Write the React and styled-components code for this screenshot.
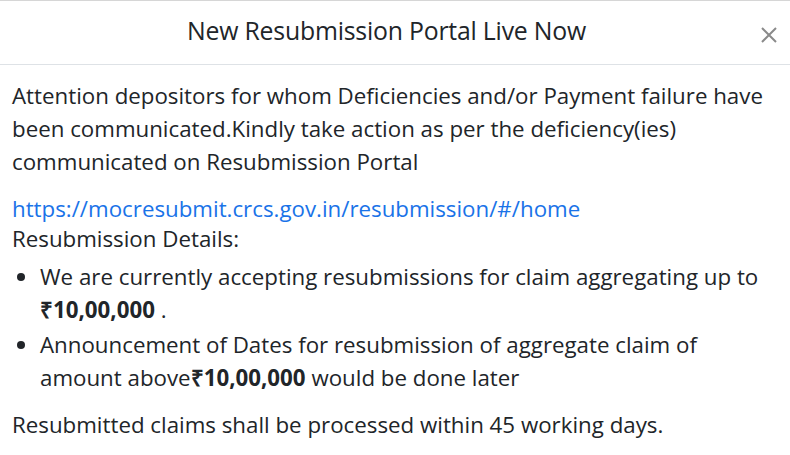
import React from "react";
import styled, { createGlobalStyle } from "styled-components";

const GlobalStyle = createGlobalStyle`
  html, body {
    margin: 0;
    padding: 0;
    background: #ffffff;
  }
  body {
    font-family: "Open Sans", "Liberation Sans", sans-serif;
    color: #212529;
  }
`;

const Modal = styled.div`
  width: 790px;
  height: 455px;
  box-sizing: border-box;
  border-top: 1px solid #d6d6d6;
  background: #fff;
`;

const Header = styled.div`
  position: relative;
  display: flex;
  align-items: center;
  justify-content: center;
  height: 64px;
  box-sizing: border-box;
  padding: 0 17px 5px 0;
  border-bottom: 1px solid #dee2e6;
`;

const Title = styled.h5`
  margin: 0;
  font-size: 24.8px;
  font-weight: 500;
  color: #212529;
  letter-spacing: -0.2px;
`;

const CloseButton = styled.button`
  position: absolute;
  right: 10px;
  top: 23px;
  border: 0;
  background: transparent;
  padding: 0;
  width: 22px;
  height: 22px;
  display: flex;
  align-items: center;
  justify-content: center;
  cursor: pointer;
`;

const Body = styled.div`
  padding: 14px 12px 0 12px;
  font-size: 22.3px;
  line-height: 33px;
  color: #212529;
`;

const Para = styled.p`
  margin: 0 0 ${(p) => p.$gap || 0}px 0;
`;

const Link = styled.a`
  display: block;
  color: #1a73e8;
  text-decoration: none;
  line-height: 30px;
`;

const Label = styled.div`
  line-height: 30px;
`;

const List = styled.ul`
  margin: 6px 0 14px 0;
  padding-left: 28px;
`;

const Item = styled.li`
  line-height: 33px;
  margin-bottom: 2px;
`;

export default function App() {
  return (
    <>
      <GlobalStyle />
      <Modal>
        <Header>
          <Title>New Resubmission Portal Live Now</Title>
          <CloseButton aria-label="Close">
            <svg width="16" height="16" viewBox="0 0 16 16">
              <path d="M1 1 L15 15 M15 1 L1 15" stroke="#8a8a8a" strokeWidth="2" />
            </svg>
          </CloseButton>
        </Header>
        <Body>
          <Para $gap={16}>
            Attention depositors for whom Deficiencies and/or Payment failure have
            been communicated.Kindly take action as per the deficiency(ies)
            communicated on Resubmission Portal
          </Para>
          <Link href="#">https://mocresubmit.crcs.gov.in/resubmission/#/home</Link>
          <Label>Resubmission Details:</Label>
          <List>
            <Item>
              We are currently accepting resubmissions for claim aggregating up to{" "}
              <b>₹10,00,000</b> .
            </Item>
            <Item>
              Announcement of Dates for resubmission of aggregate claim of amount
              above<b>₹10,00,000</b> would be done later
            </Item>
          </List>
          <Para>Resubmitted claims shall be processed within 45 working days.</Para>
        </Body>
      </Modal>
    </>
  );
}
